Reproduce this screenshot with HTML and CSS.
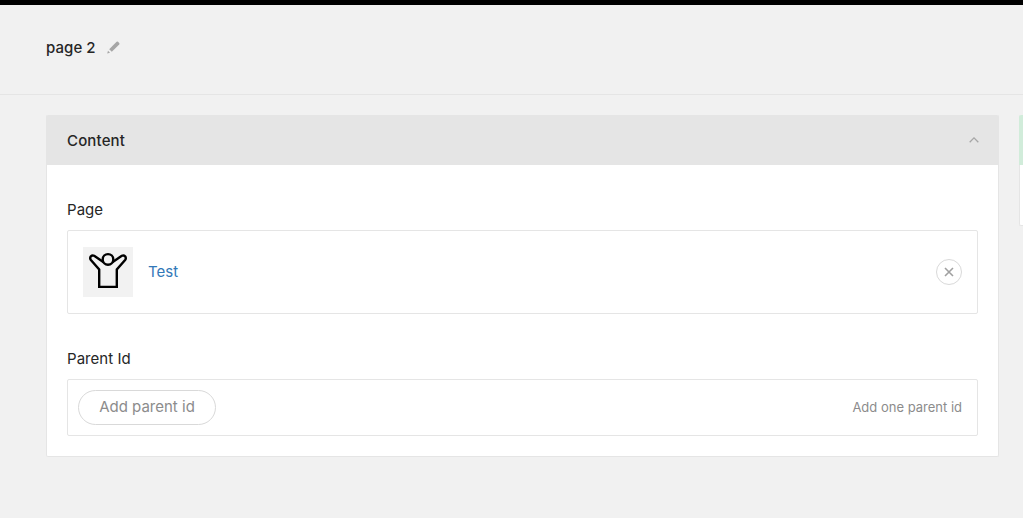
FILE: index.html
```
<!DOCTYPE html>
<html lang="en">
<head>
    <meta charset="UTF-8">
    <meta name="viewport" content="width=device-width, initial-scale=1.0">
    <title>page 2</title>
    <link rel="stylesheet" href="styles.css">
</head>
<body>
    <header class="titlebar">
        <h1 class="title">page 2</h1>
        <svg class="pencil" width="13" height="13" viewBox="0 0 13 13">
            <path d="M2.2 8.2 9.6.8a1 1 0 0 1 1.4 0l1.2 1.2a1 1 0 0 1 0 1.4L4.8 10.8z"/>
            <path d="M.2 12.4 1 9.8 3 11.8z"/>
        </svg>
    </header>
    <main class="wrapper">
        <section class="panel">
            <div class="panel-header">
                <h2>Content</h2>
                <svg width="10" height="6" viewBox="0 0 10 6">
                    <path d="M.7 5.2 5 .9l4.3 4.3"/>
                </svg>
            </div>
            <div class="panel-body">
                <label class="label">Page</label>
                <div class="field item">
                    <div class="thumb">
                        <svg width="50" height="50" viewBox="0 0 50 50">
                            <path d="M20.6 15.3 11.2 8.8Q9.3 7.8 7.9 9.3 6.5 11.2 7.9 13L16.2 22.5V39.9H33.8V22.5L42.1 13Q43.5 11.2 42.1 9.3 40.7 7.8 38.8 8.8L29.4 15.3"/>
                            <circle cx="25" cy="12.4" r="5.3"/>
                        </svg>
                    </div>
                    <a href="#" class="item-link">Test</a>
                    <button class="remove" aria-label="Remove">
                        <svg width="10" height="10" viewBox="0 0 10 10">
                            <path d="M1 1l8 8M9 1 1 9"/>
                        </svg>
                    </button>
                </div>
                <label class="label">Parent Id</label>
                <div class="field browser">
                    <button class="add">Add parent id</button>
                    <span class="note">Add one parent id</span>
                </div>
            </div>
        </section>
        <aside class="side">
            <div class="side-header"></div>
        </aside>
    </main>
</body>
</html>
```
FILE: styles.css
```
* {
    box-sizing: border-box;
}
body {
    margin: 0;
    height: 518px;
    overflow: hidden;
    background-color: #f1f1f1;
    color: #262626;
    font-family: Inter, "Liberation Sans", sans-serif;
    font-size: 15px;
    line-height: 20px;
}
svg {
    display: block;
}
h1, h2 {
    margin: 0;
    font-size: 15px;
    font-weight: 450;
    letter-spacing: 0.15px;
}
.titlebar {
    display: flex;
    align-items: center;
    gap: 11px;
    height: 95px;
    padding: 0 46px 4px;
    border-top: 5px solid #000;
    border-bottom: 1px solid #e5e5e5;
}
.title {
    letter-spacing: 0.05px;
}
.pencil {
    margin-top: -1px;
    fill: #a6a6a6;
}
.wrapper {
    display: flex;
    align-items: flex-start;
    gap: 20px;
    padding: 20px 0 0 46px;
}
.panel {
    flex: 0 0 953px;
    height: 342px;
    background-color: #fff;
    border: 1px solid #e5e5e5;
    border-top: 0;
    border-radius: 2px;
}
.panel-header {
    display: flex;
    align-items: center;
    justify-content: space-between;
    height: 50px;
    margin: 0 -1px;
    padding: 1px 20px 0 21px;
    background-color: #e5e5e5;
    border-radius: 2px 2px 0 0;
}
.panel-header svg {
    margin-bottom: 2px;
    fill: none;
    stroke: #a6a6a6;
    stroke-width: 1.3;
}
.panel-body {
    padding: 0 20px;
}
.label {
    display: block;
    padding: 35px 0 10px;
    letter-spacing: 0.05px;
}
.field {
    display: flex;
    align-items: center;
    border: 1px solid #e5e5e5;
    border-radius: 2px;
}
.item {
    height: 84px;
    padding: 0 15px;
}
.thumb {
    background-color: #f2f2f2;
}
.thumb svg {
    fill: none;
    stroke: #000;
    stroke-width: 2.4;
}
.item-link {
    margin-left: 15px;
    color: #3278b8;
    text-decoration: none;
}
.remove {
    display: flex;
    align-items: center;
    justify-content: center;
    width: 26px;
    height: 26px;
    margin-left: auto;
    padding: 0;
    background: none;
    border: 1px solid #d9d9d9;
    border-radius: 50%;
}
.remove svg {
    fill: none;
    stroke: #a0a0a0;
    stroke-width: 1.6;
}
.browser {
    justify-content: space-between;
    height: 57px;
    padding: 0 15px 0 10px;
}
.add {
    width: 138px;
    height: 35px;
    padding: 0 0 2px;
    background: none;
    border: 1px solid #d9d9d9;
    border-radius: 18px;
    color: #8c8c8c;
    font: inherit;
}
.note {
    padding-bottom: 1px;
    color: #8c8c8c;
    font-size: 13px;
}
.side {
    flex: 1;
    min-width: 0;
    height: 111px;
    background-color: #fff;
    border: 1px solid #e5e5e5;
    border-width: 0 0 1px 1px;
    border-radius: 2px 0 0 2px;
}
.side-header {
    height: 50px;
    margin-left: -1px;
    background-color: #d1ecda;
    border-radius: 2px 0 0 0;
}
```
